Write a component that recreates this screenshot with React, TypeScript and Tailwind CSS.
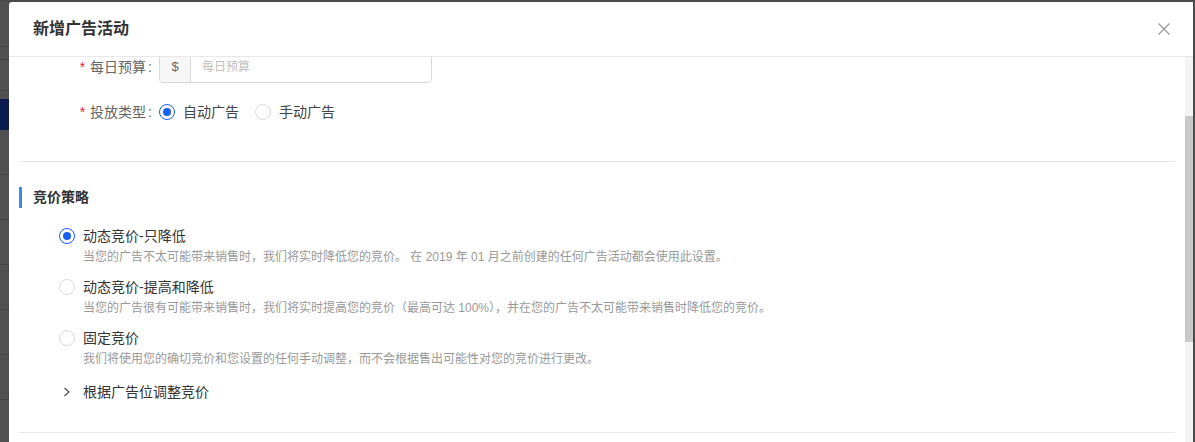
import React from "react";

const font = { fontFamily: '"Liberation Sans", "Noto Sans CJK SC", sans-serif' };

function Radio({ checked }: { checked?: boolean }) {
	return (
		<span
			className={
				"flex h-4 w-4 shrink-0 items-center justify-center rounded-full border bg-white " +
				(checked ? "border-[#1a5ff5]" : "border-[#d9d9d9]")
			}
		>
			{checked && <span className="h-2 w-2 rounded-full bg-[#1a5ff5]" />}
		</span>
	);
}

const strategies = [
	{
		title: "动态竞价-只降低",
		desc: "当您的广告不太可能带来销售时，我们将实时降低您的竞价。 在 2019 年 01 月之前创建的任何广告活动都会使用此设置。",
		checked: true,
	},
	{
		title: "动态竞价-提高和降低",
		desc: "当您的广告很有可能带来销售时，我们将实时提高您的竞价（最高可达 100%），并在您的广告不太可能带来销售时降低您的竞价。",
	},
	{
		title: "固定竞价",
		desc: "我们将使用您的确切竞价和您设置的任何手动调整，而不会根据售出可能性对您的竞价进行更改。",
	},
];

export default function App() {
	return (
		<div className="flex h-[442px] w-[1195px] flex-col overflow-hidden bg-[#4a4a4a]" style={font}>
			<div className="h-[2px] shrink-0" />
			<div className="flex min-h-0 flex-1">
				{/* page behind overlay */}
				<div className="flex w-[9px] shrink-0 flex-col bg-[#505050]">
					<div className="mt-[44px] h-px bg-[#444]" />
					<div className="mt-[12px] h-px bg-[#444]" />
					<div className="mt-[30px] h-px bg-[#444]" />
					<div className="mt-[8px] h-[31px] bg-[#0b1b4d]" />
					{[0, 1, 2, 3, 4, 5].map((i) => (
						<div key={i} className="mt-[44px] h-px bg-[#444]" />
					))}
				</div>

				{/* modal */}
				<div className="flex w-[1184px] shrink-0 flex-col rounded-tl-[3px] bg-white">
					<div className="flex h-[55px] shrink-0 items-center justify-between border-b border-[#e8e8e8] pl-[24px] pr-[22px]">
						<h1 className="text-[16px] font-bold leading-[22px] text-[#333]">新增广告活动</h1>
						<svg width="14" height="14" viewBox="0 0 14 14" className="text-[#999]">
							<path d="M1.5 1.5 L12.5 12.5 M12.5 1.5 L1.5 12.5" stroke="currentColor" strokeWidth="1.3" fill="none" />
						</svg>
					</div>

					<div className="flex min-h-0 flex-1">
						<div className="min-w-0 flex-1 overflow-hidden px-[10px]">
							<div className="mt-[-6px]">
								{/* form */}
								<div className="flex h-8 items-center">
									<label className="w-[140px] shrink-0 pr-[7px] text-right text-[14px] text-[#666]">
										<span className="mr-[5px] text-[#f5222d]">*</span>每日预算<span className="ml-[2px]">:</span>
									</label>
									<div className="flex h-8 w-[273px] overflow-hidden rounded-[4px] border border-[#d9d9d9]">
										<span className="flex w-[31px] items-center justify-center border-r border-[#d9d9d9] bg-[#f7f7f7] text-[13px] text-[#666]">
											$
										</span>
										<span className="flex items-center pl-[11px] text-[12px] text-[#bfbfbf]">每日预算</span>
									</div>
								</div>
								<div className="mt-[13px] flex h-8 items-center">
									<label className="w-[140px] shrink-0 pr-[7px] text-right text-[14px] text-[#666]">
										<span className="mr-[5px] text-[#f5222d]">*</span>投放类型<span className="ml-[2px]">:</span>
									</label>
									<div className="flex items-center text-[14px] text-[#444]">
										<Radio checked />
										<span className="ml-2">自动广告</span>
										<span className="ml-4">
											<Radio />
										</span>
										<span className="ml-2">手动广告</span>
									</div>
								</div>

								<div className="mt-[33px] border-t border-[#e8e8e8]" />

								{/* bidding strategy */}
								<div className="mt-[25px] flex h-[21px] items-center">
									<span className="h-[21px] w-[3px] bg-[#3b87f5]" />
									<span className="ml-[11px] text-[14px] font-bold text-[#333]">竞价策略</span>
								</div>

								<div className="ml-[40px] mt-[18px] flex flex-col gap-[10px]">
									{strategies.map((s) => (
										<div key={s.title}>
											<div className="flex h-5 items-center">
												<Radio checked={s.checked} />
												<span className="ml-2 text-[14px] leading-5 text-[#333]">{s.title}</span>
											</div>
											<p className="ml-6 mt-px text-[12px] leading-5 text-[#999]">{s.desc}</p>
										</div>
									))}
									<div className="mt-[3px] flex h-5 items-center">
										<span className="flex w-4 justify-center">
											<svg width="8" height="10" viewBox="0 0 8 10" className="text-[#444]">
												<path d="M1.5 1 L6 5 L1.5 9" stroke="currentColor" strokeWidth="1.1" fill="none" />
											</svg>
										</span>
										<span className="ml-2 text-[14px] leading-5 text-[#333]">根据广告位调整竞价</span>
									</div>
								</div>

								<div className="mt-[30px] border-t border-[#e8e8e8]" />
							</div>
						</div>

						{/* scrollbar */}
						<div className="w-[8px] shrink-0 bg-[#f4f4f4]">
							<div className="mt-[59px] h-[226px] bg-[#c9c9c9]" />
						</div>
					</div>
				</div>
				<div className="w-[2px] shrink-0" />
			</div>
		</div>
	);
}
